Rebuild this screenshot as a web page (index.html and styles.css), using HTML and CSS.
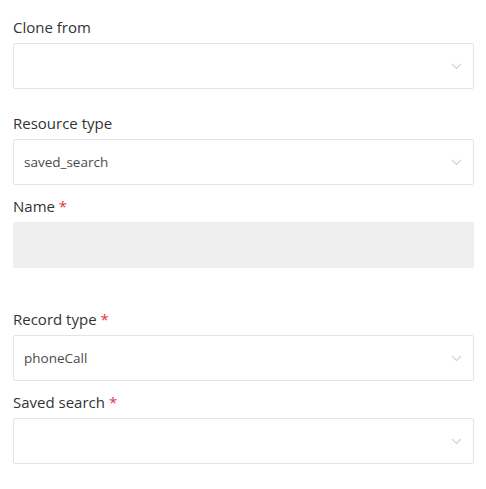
FILE: index.html
```html
<!DOCTYPE html>
<html>
<head>
<meta charset="utf-8">
<link rel="stylesheet" href="styles.css">
</head>
<body>
<form class="form">
  <div class="field field-clone">
    <div class="label">Clone from</div>
    <div class="select">
      <span class="value"></span>
      <svg class="chev" width="11" height="7" viewBox="0 0 11 7"><path d="M1 1 L5.5 5.5 L10 1" fill="none" stroke="#d6cfe0" stroke-width="1.2"/></svg>
    </div>
  </div>
  <div class="field">
    <div class="label">Resource type</div>
    <div class="select">
      <span class="value">saved_search</span>
      <svg class="chev" width="11" height="7" viewBox="0 0 11 7"><path d="M1 1 L5.5 5.5 L10 1" fill="none" stroke="#d6cfe0" stroke-width="1.2"/></svg>
    </div>
  </div>
  <div class="field field-name">
    <div class="label">Name <span class="req">*</span></div>
    <div class="input disabled"></div>
  </div>
  <div class="field">
    <div class="label">Record type <span class="req">*</span></div>
    <div class="select">
      <span class="value">phoneCall</span>
      <svg class="chev" width="11" height="7" viewBox="0 0 11 7"><path d="M1 1 L5.5 5.5 L10 1" fill="none" stroke="#d6cfe0" stroke-width="1.2"/></svg>
    </div>
  </div>
  <div class="field">
    <div class="label">Saved search <span class="req">*</span></div>
    <div class="select">
      <span class="value"></span>
      <svg class="chev" width="11" height="7" viewBox="0 0 11 7"><path d="M1 1 L5.5 5.5 L10 1" fill="none" stroke="#d6cfe0" stroke-width="1.2"/></svg>
    </div>
  </div>
</form>
</body>
</html>
```
FILE: styles.css
```css
html, body {
  margin: 0;
  padding: 0;
  background: #ffffff;
}
body {
  font-family: "Open Sans", "Liberation Sans", sans-serif;
  color: #333333;
}
.form {
  display: flex;
  flex-direction: column;
  padding: 17px 12px 0 13px;
}
.field {
  display: flex;
  flex-direction: column;
  gap: 6px;
  margin-bottom: 11px;
}
.field-clone {
  margin-bottom: 24px;
}
.field-name {
  margin-bottom: 41px;
}
.label {
  font-size: 15px;
  line-height: 20px;
  color: #333333;
}
.req {
  color: #e8323c;
}
.select {
  height: 46px;
  box-sizing: border-box;
  border: 1px solid #e4e4e4;
  border-radius: 2px;
  display: flex;
  align-items: center;
  justify-content: space-between;
  padding: 0 11px 0 10px;
  background: #fff;
}
.value {
  font-size: 13.5px;
  font-weight: 500;
  color: #4a4a4a;
}
.chev {
  display: block;
}
.input {
  height: 46px;
  box-sizing: border-box;
  border-radius: 2px;
}
.input.disabled {
  background: #efefef;
}
```
